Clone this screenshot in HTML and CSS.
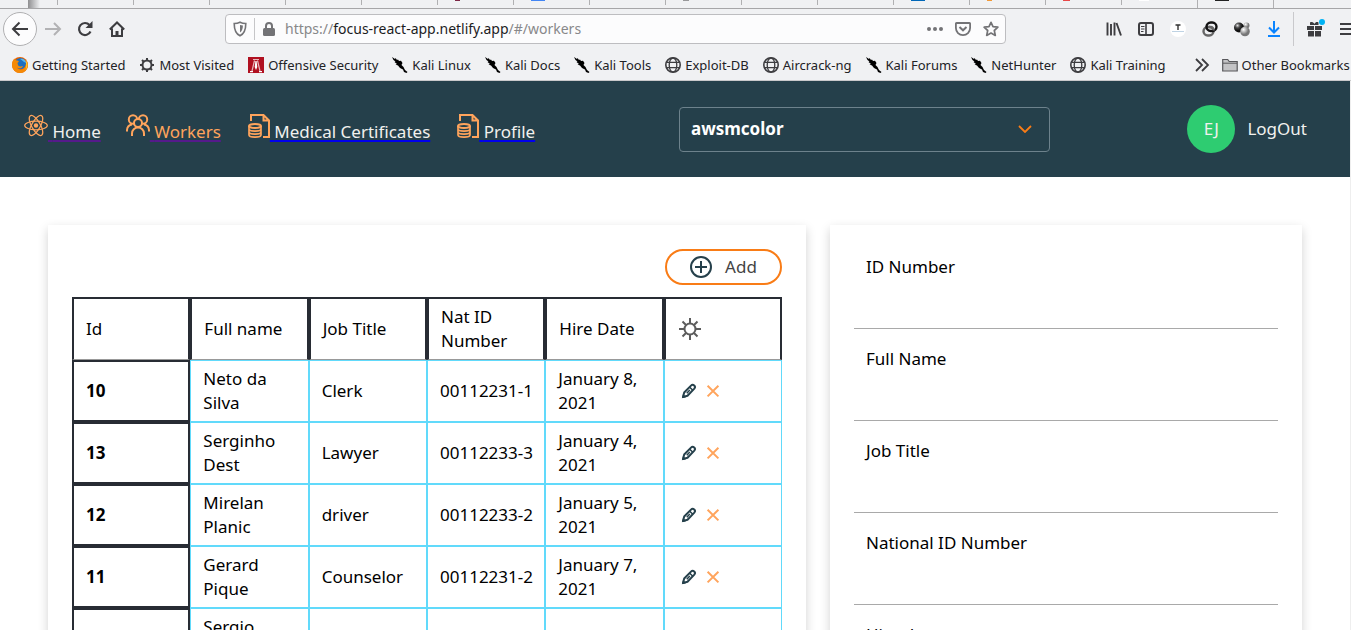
FILE: index.html
```html
<!DOCTYPE html>
<html lang="en">
<head>
<meta charset="utf-8">
<meta name="viewport" content="width=device-width, initial-scale=1">
<title>Workers</title>
<link rel="stylesheet" href="styles.css">
</head>
<body>
<svg class="sprite" aria-hidden="true">
  <symbol id="kali" viewBox="0 0 16 16"><path d="M0 0l3 2 .5-1L5 3l1-.5L7 4l2-.3L10.500 6 9.500 8l2 2 1.500 3 2.500 2-1 1-2.500-1-1-2.500L8 11 6 8.500 3.500 7.500 5 7 2.500 5l1-.5L1.500 3z"/></symbol>
  <symbol id="globe" viewBox="0 0 16 16"><g fill="none" stroke="#3d3d40" stroke-width="1.300"><circle cx="8" cy="8" r="7.200" stroke-width="1.600"/><ellipse cx="8" cy="8" rx="3.800" ry="7"/><path d="M1.500 5.300h13M1.500 10.700h13"/></g></symbol>
  <symbol id="people" viewBox="0 0 24 24"><g fill="none" stroke="#ffa45c" stroke-width="2"><circle cx="7" cy="5.500" r="4.200"/><circle cx="17" cy="5.500" r="4.200"/><circle cx="12" cy="9" r="4" fill="#25404b"/><path d="M6 22v-2.500a6 6 0 0 1 12 0V22M1 17.500V16a6 6 0 0 1 5-5.500M23 17.500V16a6 6 0 0 0-5-5.500"/></g></symbol>
  <symbol id="filedb" viewBox="0 0 24 24"><g fill="none" stroke="#ffa45c" stroke-width="2"><path d="M5 7V1h12.500L23 6.500V23h-6M17.500 1v5.500H23"/><ellipse cx="9" cy="12" rx="6" ry="2"/><path d="M3 12v9c0 2.700 12 2.700 12 0v-9M3 15c0 2.700 12 2.700 12 0M3 18c0 2.700 12 2.700 12 0" stroke-width="1.700"/></g></symbol>
  <symbol id="pencil" viewBox="0 0 24 24"><g fill="none" stroke="#25404b" stroke-width="2" stroke-linejoin="round"><path d="M6 18l1.200-4.500L14 6.600c1-1 2.200-1 3.200-.1s1 2.100.1 3.100l-6.800 7.100z"/><path d="M12.500 8l3.300 3.200M9.800 14.200l3-3.200" stroke-width="1.500"/></g><path d="M4.800 19.200l1.200-4 3 3z" fill="#25404b"/></symbol>
  <symbol id="cross" viewBox="0 0 24 24"><path d="M6.600 6.800l10.800 10.600M17.400 6.800L6.600 17.400" stroke="#ffa45c" stroke-width="2"/></symbol>
</svg>

<div class="chrome">
  <div class="tabs" aria-hidden="true">
    <i class="tabs-shadow"></i>
    <i class="tab"></i><i class="tab"></i><i class="tab"></i><i class="tab"></i><i class="tab"></i>
    <i class="tab maroon"></i><i class="tab blue"></i><i class="tab"></i><i class="tab gray"></i><i class="tab"></i><i class="tab"></i>
    <i class="tab navy"></i><i class="tab orange"></i><i class="tab red"></i><i class="tab white"></i><i class="tab black active"></i><i class="tab rest"></i>
  </div>

  <div class="toolbar">
    <button class="back" aria-label="Back"><svg width="18" height="18" viewBox="0 0 18 18"><path d="M17 9H2M8.500 2.500L2 9l6.500 6.500" fill="none" stroke="#3d3d40" stroke-width="2"/></svg></button>
    <button class="tool" aria-label="Forward"><svg width="18" height="18" viewBox="0 0 18 18"><path d="M1 9h15M10 3l6 6-6 6" fill="none" stroke="#b2b2b4" stroke-width="2"/></svg></button>
    <button class="tool" aria-label="Reload"><svg width="16" height="16" viewBox="0 0 16 16"><path d="M13.500 10.500A6 6 0 1 1 12.500 4" fill="none" stroke="#3d3d40" stroke-width="2.200"/><path d="M15.500 0v7H8.500z" fill="#3d3d40"/></svg></button>
    <button class="tool" aria-label="Home page"><svg width="16" height="16" viewBox="0 0 16 16"><path d="M.8 8.500L8 1.500l7.200 7M3 7.500V15h10V7.500" fill="none" stroke="#3d3d40" stroke-width="2"/><path d="M6.500 15v-5h3v5z" fill="#3d3d40"/></svg></button>
    <div class="address">
      <svg width="14" height="16" viewBox="0 0 14 16"><path d="M7 1.200c2 1 4 1.300 5.800 1.300C12.800 8 12 12.500 7 14.800 2 12.500 1.200 8 1.200 2.500 3 2.500 5 2.200 7 1.200z" fill="none" stroke="#737376" stroke-width="1.600"/><path d="M7 4v7.500c2.200-1.500 2.800-4 2.900-7C8.800 4.500 8 4.300 7 4z" fill="#737376"/></svg>
      <i class="address-rule"></i>
      <svg width="12" height="14" viewBox="0 0 12 14"><path d="M3 6V4a3 3 0 0 1 6 0v2" fill="none" stroke="#737376" stroke-width="2"/><rect y="6" width="12" height="8" rx="1.500" fill="#737376"/></svg>
      <a class="url" href="#/workers">https://<b>focus-react-app.netlify.app</b>/#/workers</a>
      <svg width="16" height="16" viewBox="0 0 16 16" fill="#737376"><circle cx="2" cy="8" r="2"/><circle cx="8" cy="8" r="2"/><circle cx="14" cy="8" r="2"/></svg>
      <svg class="pocket" width="16" height="16" viewBox="0 0 16 16" fill="none" stroke="#737376" stroke-width="1.800"><path d="M1.500 2h13c.4 0 .6.300.6.600V7A7.100 7.100 0 0 1 .9 7V2.600c0-.3.2-.6.6-.6z"/><path d="M4.500 6L8 9.300 11.500 6" stroke-width="2"/></svg>
      <svg width="16" height="16" viewBox="0 0 16 16"><path d="M8 1.300l2 4.400 4.900.5-3.600 3.300 1 4.900L8 12l-4.300 2.400 1-4.900L1.100 6.200 6 5.700z" fill="none" stroke="#737376" stroke-width="1.700" stroke-linejoin="round"/></svg>
    </div>
    <button class="tool" aria-label="Library"><svg width="16" height="16" viewBox="0 0 16 16"><path d="M1.500 1.500v13M5 3v11.500M8.500 1.500v13M10.500 2l4.500 12.500" stroke="#3d3d40" stroke-width="1.900"/></svg></button>
    <button class="tool" aria-label="Sidebars"><svg width="16" height="16" viewBox="0 0 16 16" fill="none" stroke="#3d3d40"><rect x="1" y="2" width="14" height="12" rx="2" stroke-width="2"/><path d="M8 2v12" stroke-width="1.600"/><path d="M3 5.500h3.500M3 8h3.500M3 10.500h2.500"/></svg></button>
    <button class="tool" aria-label="Extension"><svg width="16" height="16" viewBox="0 0 16 16"><circle cx="8" cy="8" r="8" fill="#fff"/><path d="M5.500 4h5M8 4v5" stroke="#333" stroke-width="1.400"/><path d="M2.500 10.500h11" stroke="#7fa6c9" stroke-dasharray="1 1"/></svg></button>
    <button class="tool" aria-label="Links"><svg width="16" height="16" viewBox="0 0 16 16" fill="none" stroke-width="2.400"><rect x="1.500" y="6" width="10" height="8.500" rx="4.200" stroke="#666"/><rect x="4.500" y="1.500" width="10" height="8.500" rx="4.200" stroke="#111"/><path d="M7 6h1.500a3 3 0 0 1 3 3.500" stroke="#666"/></svg></button>
    <button class="tool" aria-label="Spheres"><svg width="16" height="16" viewBox="0 0 16 16"><defs><radialGradient id="s1" cx=".35" cy=".3"><stop offset="0" stop-color="#ddd"/><stop offset=".5" stop-color="#444"/><stop offset="1" stop-color="#111"/></radialGradient><radialGradient id="s2" cx=".35" cy=".3"><stop offset="0" stop-color="#fff"/><stop offset="1" stop-color="#777"/></radialGradient></defs><circle cx="12.500" cy="4.500" r="3" fill="url(#s2)"/><circle cx="5" cy="6.500" r="5" fill="url(#s1)"/><circle cx="11" cy="10.500" r="4.800" fill="url(#s2)"/></svg></button>
    <button class="tool" aria-label="Downloads"><svg width="16" height="16" viewBox="0 0 16 16"><path d="M8 0v11M3 6.500l5 5 5-5M2 15h12" fill="none" stroke="#0a84ff" stroke-width="2"/></svg></button>
    <i class="toolbar-rule"></i>
    <button class="tool" aria-label="What's new"><svg width="20" height="20" viewBox="0 0 20 20" fill="#3d3d40"><path d="M2 7h7v4H2zM10 7h7v4h-7zM3 12h6v5.500H3zM10 12h6v5.500h-6zM5 3.500c1.500-1 3-.5 4.500 1.500 1-2 2.500-2.500 4-1.500V6H5z"/><circle cx="17" cy="3" r="3" fill="#00b3f4"/></svg></button>
    <button class="menu" aria-label="Open menu"><svg width="16" height="16" viewBox="0 0 16 16"><path d="M1 3h14M1 8h14M1 13h14" stroke="#3d3d40" stroke-width="2"/></svg></button>
  </div>

  <div class="bookmarks">
    <a href="#start"><svg viewBox="0 0 16 16"><circle cx="8" cy="8" r="8" fill="#e66000"/><circle cx="8.500" cy="6.500" r="5.500" fill="#1d6fc0"/><path d="M8 2c3-1 6 1 6 4-2-1-3-2-6-4z" fill="#55b8ee"/><path d="M.3 5C1 3 2 2 3 1.500c0 1 .5 1.500 1.500 2 1.500 0 2 .5 2.500 1L5.500 6 6 8c1 2 3 1.500 5 1-1 2.500-4 3-6 1.500 2 3.500 8 3 9-3.500.5-2 0-3-.5-4 2 2 2.500 4 2.500 5a8 8 0 0 1-16 0z" fill="#f58a07"/><path d="M13.500 3C16 6 16 10 13.500 13c1-3 1-7 0-10z" fill="#ffd12f"/></svg>Getting Started</a>
    <a href="#visited"><svg viewBox="0 0 16 16" fill="none" stroke="#3d3d40"><circle cx="8" cy="8" r="4.500" stroke-width="2"/><path d="M8 1v2.500M8 12.500V15M1 8h2.500M12.500 8H15M3 3l2 2M11 11l2 2M3 13l2-2M11 5l2-2" stroke-width="2"/></svg>Most Visited</a>
    <a href="#offsec"><svg viewBox="0 0 16 16"><path fill="#b01020" d="M0 0h16v16H0z"/><path d="M5 2.500h6M6.500 3.500L4 14M9.500 3.500L12 14" stroke="#e8b8bc" stroke-width="1.200" fill="none"/><path d="M7.400 4h1.200l.7 6L8 13l-1.300-3zM2 14h3v1.200H2zM11 14h3v1.200h-3z" fill="#fff"/></svg>Offensive Security</a>
    <a href="#linux"><svg><use href="#kali"/></svg>Kali Linux</a>
    <a href="#docs"><svg><use href="#kali"/></svg>Kali Docs</a>
    <a href="#tools"><svg><use href="#kali"/></svg>Kali Tools</a>
    <a href="#exploit"><svg><use href="#globe"/></svg>Exploit-DB</a>
    <a href="#aircrack"><svg><use href="#globe"/></svg>Aircrack-ng</a>
    <a href="#forums"><svg><use href="#kali"/></svg>Kali Forums</a>
    <a href="#nethunter"><svg><use href="#kali"/></svg>NetHunter</a>
    <a href="#training"><svg><use href="#globe"/></svg>Kali Training</a>
    <button class="more" aria-label="More bookmarks"><svg viewBox="0 0 16 16"><path d="M2 2l6 6-6 6M8 2l6 6-6 6" fill="none" stroke="#3d3d40" stroke-width="1.800"/></svg></button>
    <a href="#other"><svg viewBox="0 0 16 16"><path d="M.7 14V2.500h5l1.500 2h8V14z" fill="#c4c4c6" stroke="#58585b" stroke-width="1.200"/><path d="M1 6.200h14" stroke="#58585b"/></svg>Other Bookmarks</a>
  </div>
</div>

<div class="page">
  <header class="header">
    <nav class="nav">
      <a class="visited" href="#/"><svg viewBox="0 0 24 24"><g fill="none" stroke="#ffa45c" stroke-width="1.200"><ellipse cx="12" cy="11.500" rx="11.300" ry="4.300"/><ellipse cx="12" cy="11.500" rx="11.300" ry="4.300" transform="rotate(60 12 11.500)"/><ellipse cx="12" cy="11.500" rx="11.300" ry="4.300" transform="rotate(120 12 11.500)"/></g><circle cx="12" cy="11.500" r="2.200" fill="#ffa45c"/></svg> <span>Home</span></a>
      <a class="visited current" href="#/workers"><svg><use href="#people"/></svg> <span>Workers</span></a>
      <a href="#/certificates"><svg><use href="#filedb"/></svg> <span>Medical Certificates</span></a>
      <a href="#/profile"><svg><use href="#filedb"/></svg> <span>Profile</span></a>
    </nav>
    <div class="company">
      <select aria-label="Company"><option>awsmcolor</option></select>
      <svg viewBox="0 0 14 8"><path d="M1 1l6 6 6-6" fill="none" stroke="#f97c16" stroke-width="1.800"/></svg>
    </div>
    <div class="account"><span class="avatar">EJ</span><button class="logout">LogOut</button></div>
  </header>

  <main class="content">
    <section class="card">
      <button class="add"><svg width="22" height="22" viewBox="0 0 22 22" fill="none" stroke="#25404b" stroke-width="2"><circle cx="11" cy="11" r="10"/><path d="M11 5v12M5 11h12"/></svg>Add</button>
      <table class="workers">
        <thead>
          <tr><th scope="col">Id</th><th scope="col">Full name</th><th scope="col">Job Title</th><th scope="col">Nat ID Number</th><th scope="col">Hire Date</th><th scope="col"><svg class="gear" viewBox="0 0 24 24" role="img" aria-label="Actions"><g fill="none" stroke="#5c5c5c" stroke-width="2"><circle cx="12" cy="12" r="5.500"/><path d="M12 1v5M12 18v5M1 12h5M18 12h5M4.500 4.500L8 8M16 16l3.500 3.500M4.500 19.500L8 16M16 8l3.500-3.500"/></g></svg></th></tr>
        </thead>
        <tbody>
          <tr><th scope="row">10</th><td>Neto da Silva</td><td>Clerk</td><td class="number">00112231-1</td><td>January 8, 2021</td><td><div class="actions"><button aria-label="Edit"><svg><use href="#pencil"/></svg></button><button aria-label="Delete"><svg><use href="#cross"/></svg></button></div></td></tr>
          <tr><th scope="row">13</th><td>Serginho Dest</td><td>Lawyer</td><td class="number">00112233-3</td><td>January 4, 2021</td><td><div class="actions"><button aria-label="Edit"><svg><use href="#pencil"/></svg></button><button aria-label="Delete"><svg><use href="#cross"/></svg></button></div></td></tr>
          <tr><th scope="row">12</th><td>Mirelan Planic</td><td>driver</td><td class="number">00112233-2</td><td>January 5, 2021</td><td><div class="actions"><button aria-label="Edit"><svg><use href="#pencil"/></svg></button><button aria-label="Delete"><svg><use href="#cross"/></svg></button></div></td></tr>
          <tr><th scope="row">11</th><td>Gerard Pique</td><td>Counselor</td><td class="number">00112231-2</td><td>January 7, 2021</td><td><div class="actions"><button aria-label="Edit"><svg><use href="#pencil"/></svg></button><button aria-label="Delete"><svg><use href="#cross"/></svg></button></div></td></tr>
          <tr><th scope="row"></th><td>Sergio Ramos</td><td></td><td></td><td></td><td></td></tr>
        </tbody>
      </table>
    </section>
    <form class="card details">
      <div class="field"><label for="idn">ID Number</label><input id="idn" type="text"></div>
      <div class="field"><label for="fname">Full Name</label><input id="fname" type="text"></div>
      <div class="field"><label for="job">Job Title</label><input id="job" type="text"></div>
      <div class="field"><label for="nid">National ID Number</label><input id="nid" type="text"></div>
      <div class="field"><label for="hire">Hire date</label><input id="hire" type="text"></div>
    </form>
  </main>
</div>
</body>
</html>
```

FILE: styles.css
```css
* { box-sizing: border-box; }

body {
  display: flex;
  flex-direction: column;
  height: 100vh;
  margin: 0;
  overflow: hidden;
  background: #fff;
  color: #000;
  font-family: "Noto Sans", "Open Sans", sans-serif;
}

button, input, select { font: inherit; }
button { padding: 0; border: 0; background: none; color: inherit; }
.sprite { position: absolute; width: 0; height: 0; }

/* Browser window */
.chrome {
  flex: none;
  overflow: hidden;
  border-bottom: 1px solid #c9c9cb;
  background: #f0f1f3;
  color: #222226;
}

.tabs {
  display: flex;
  height: 9px;
  overflow: hidden;
  border-bottom: 1px solid #a6a6a8;
  background: #f0f1f3;
}
.tabs-shadow {
  flex: none;
  width: 58px;
  background: linear-gradient(#b0b0b2, #b0b0b2) right top / 1px 5px no-repeat,
    linear-gradient(to right, transparent 28px, #8e8e90 28px, transparent 40px);
}
.tab {
  flex: none;
  width: 76px;
  height: 5px;
  padding-left: 17px;
  border-right: 1px solid #b0b0b2;
}
.tab::before { display: block; width: 14px; height: 1px; content: ""; }
.maroon::before { width: 5px; background: #7c2746; }
.blue::before { background: #4285f4; }
.gray::before { width: 6px; background: #98989a; }
.navy::before { background: #0067b8; }
.orange::before { width: 5px; background: #f29a38; }
.red::before { width: 7px; background: #e84848; }
.white { height: 9px; }
.white::before { width: 10px; background: #fff; }
.black::before { background: #222; }
.active { height: 9px; }
.rest { flex: 1; border: 0; }

.toolbar {
  display: flex;
  align-items: center;
  height: 40px;
  padding-left: 3px;
}
.toolbar button {
  display: flex;
  flex: none;
  align-items: center;
  justify-content: center;
  width: 32px;
  height: 32px;
}
.toolbar svg { flex: none; }
.toolbar .back {
  width: 34px;
  height: 34px;
  border: 1px solid #b0b0b2;
  border-radius: 50%;
  background: #fcfcfd;
}
.toolbar .menu { width: 16px; margin-left: 8px; margin-right: -4px; }
.address {
  display: flex;
  flex: 1;
  align-items: center;
  min-width: 0;
  height: 30px;
  margin: 0 92px;
  padding: 0 6px 0 7px;
  border: 1px solid #bdbdc0;
  border-radius: 4px;
  background: #fcfcfd;
}
.address-rule { width: 1px; height: 22px; margin: 0 8px 0 7px; background: #c6c6c8; }
.url {
  flex: 1;
  margin-left: 10px;
  overflow: hidden;
  color: #88888a;
  font-size: 14px;
  line-height: 20px;
  text-decoration: none;
  white-space: nowrap;
}
.url b { color: #1c1c1f; font-weight: 400; }
.pocket { margin: 0 12px; }
.toolbar-rule { width: 1px; height: 34px; margin: 0 5px 0 3px; background: #c9c9cc; }

.bookmarks {
  display: flex;
  gap: 14px;
  align-items: center;
  height: 31px;
  padding-left: 12px;
  font-size: 13px;
  line-height: 20px;
  white-space: nowrap;
}
.bookmarks a {
  display: flex;
  flex: none;
  gap: 4px;
  align-items: center;
  color: inherit;
  text-decoration: none;
}
.bookmarks svg { display: block; width: 16px; height: 16px; }
.more { margin-left: 14px; margin-right: -2px; }

/* Application */
.page {
  flex: 1;
  min-height: 0;
  overflow: hidden;
  border-right: 1px solid #eee;
  font-size: 17px;
  line-height: 24px;
}

.header {
  display: grid;
  grid-template-columns: 655fr 371fr 300fr;
  align-items: center;
  height: 96px;
  padding-left: 24px;
  background: #25404b;
  color: #f1f1ee;
}
.nav { display: flex; gap: 25px; white-space: nowrap; }
.nav a {
  color: #f1f1ee;
  text-decoration: underline 2px #0000ee;
  text-decoration-skip-ink: none;
  text-underline-offset: 2px;
}
.nav .visited { text-decoration-color: #551a8b; }
.nav svg { width: 24px; height: 24px; }
.nav .current { color: #ffa45c; }

.company { position: relative; }
.company select {
  display: block;
  width: 100%;
  height: 45px;
  padding: 0 11px;
  border: 1px solid #6d828c;
  border-radius: 4px;
  appearance: none;
  background: transparent;
  color: #fff;
  font-weight: 700;
}
.company svg { position: absolute; top: 18px; right: 18px; width: 14px; height: 8px; pointer-events: none; }

.account { display: flex; gap: 12px; align-items: center; justify-content: flex-end; padding-right: 43px; }
.avatar {
  display: grid;
  place-items: center;
  width: 48px;
  height: 48px;
  border-radius: 50%;
  background: #2ecc71;
}

.content {
  display: grid;
  grid-template-columns: 758fr 472fr;
  gap: 24px;
  align-items: start;
  padding: 48px;
}
.card {
  min-width: 0;
  padding: 24px;
  background: #fff;
  box-shadow: 0 4px 10px rgba(0, 0, 0, 0.18);
}
.add {
  display: flex;
  gap: 13px;
  align-items: center;
  justify-content: center;
  width: 117px;
  height: 36px;
  margin: 0 0 12px auto;
  border: 2px solid #f97c16;
  border-radius: 18px;
  color: #444;
}

.workers { width: 100%; border-spacing: 0; table-layout: fixed; }
.workers th, .workers td { padding: 6px 12px; text-align: left; vertical-align: middle; }
.workers thead th {
  border: 2px solid #282c34;
  border-bottom: 1px solid #999;
  font-weight: 400;
}
.workers td { border: 1px solid #61dafb; }
.workers tbody th { border: 2px solid #282c34; }
.workers .number { white-space: nowrap; }
.gear { display: block; width: 24px; height: 24px; }
.actions { display: flex; }
.actions svg { display: block; width: 24px; height: 24px; }

.field { padding-top: 6px; margin-bottom: 12px; }
.field label { display: block; padding: 0 12px; }
.field input {
  display: block;
  width: 100%;
  height: 50px;
  padding: 0 12px;
  border: 0;
  border-bottom: 1px solid #a9a9a9;
  background: transparent;
}
```
